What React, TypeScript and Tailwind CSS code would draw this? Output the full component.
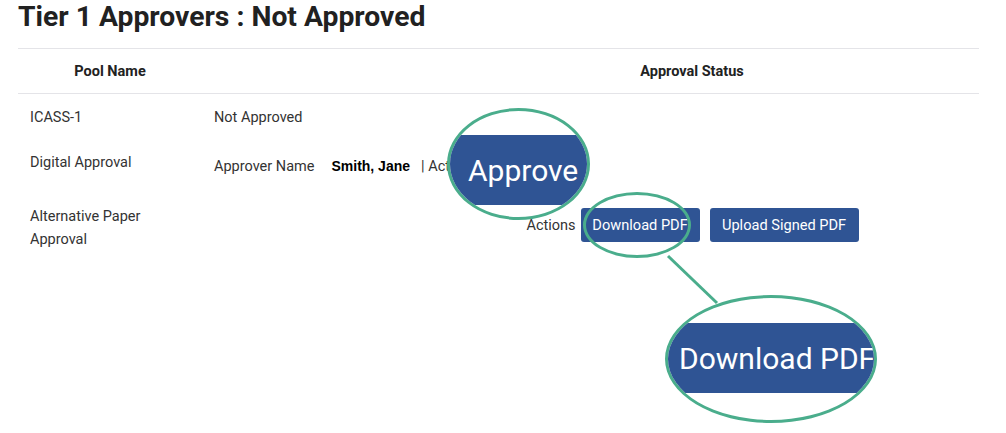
import React from "react";

const GREEN = "#4aad8c";

const Magnifier = ({
    className,
    bandTop,
    textLeft,
    label,
}: {
    className: string;
    bandTop: string;
    textLeft: string;
    label: string;
}) => (
    <div className={`absolute rounded-[50%] overflow-hidden border-[3px] border-[#4aad8c] bg-white ${className}`}>
        <div className={`absolute left-0 right-0 h-[70px] bg-[#2f5494] flex items-center ${bandTop}`}>
            <span className={`absolute ${textLeft} text-[30px] whitespace-nowrap text-white font-[Roboto,sans-serif]`}>
                {label}
            </span>
        </div>
    </div>
);

const ActionButton = ({children, className = ""}: {children: React.ReactNode; className?: string}) => (
    <button className={`h-[34px] rounded-[3px] bg-[#2f5494] text-[14.6px] text-white whitespace-nowrap ${className}`}>
        {children}
    </button>
);

export default function App() {
    return (
        <div className="relative w-[1006px] h-[433px] bg-white overflow-hidden font-[Roboto,sans-serif] text-[#333]">
            <div className="pl-[18px] pr-[27px]">
                <h1 className="h-[34px] leading-[34px] text-[28.3px] font-bold text-[#212121]">
                    Tier 1 Approvers : Not Approved
                </h1>

                <div className="mt-[14px] border-t border-[#e4e4e8]">
                    {/* header */}
                    <div className="grid grid-cols-[184px_203px_1fr] h-[45px] pt-[2px] items-center border-b border-[#e4e4e8] text-[14.5px] font-bold text-[#222]">
                        <div className="text-center">Pool Name</div>
                        <div/>
                        <div className="text-center">Approval Status</div>
                    </div>

                    {/* rows */}
                    <div className="grid grid-cols-[184px_1fr] h-[45px] text-[14.5px] leading-[23px]">
                        <div className="pl-3 pt-[12px]">ICASS-1</div>
                        <div className="pl-3 pt-[12px]">Not Approved</div>
                    </div>

                    <div className="grid grid-cols-[184px_1fr] h-[55px] text-[14.5px] leading-[23px]">
                        <div className="pl-3 pt-[12px]">Digital Approval</div>
                        <div className="pl-3 pt-[10px]">
                            <div className="flex h-[34px] items-center">
                                <span>Approver Name</span>
                                <span className="ml-[17px] text-[14px] font-bold text-black font-['Liberation_Sans',sans-serif]">
                                    Smith, Jane
                                </span>
                                <span className="ml-[11px]">| Actions</span>
                                <button className="ml-[5px] h-[34px] rounded-[3px] bg-[#2f5494] px-3 text-[14.6px] text-white">
                                    Approve
                                </button>
                            </div>
                        </div>
                    </div>

                    <div className="grid grid-cols-[184px_203px_1fr] text-[14.5px] leading-[23px]">
                        <div className="pl-3 pt-[11px] pr-8">Alternative Paper Approval</div>
                        <div/>
                        <div className="pt-[14px] flex justify-center">
                            <div className="flex h-[34px] items-center pl-[1px]">
                                <span className="mr-[5px]">Actions</span>
                                <ActionButton className="w-[119px]">Download PDF</ActionButton>
                                <ActionButton className="ml-[10px] w-[149px]">Upload Signed PDF</ActionButton>
                            </div>
                        </div>
                    </div>
                </div>
            </div>

            {/* callouts */}
            <svg className="absolute inset-0 pointer-events-none" width="1006" height="433">
                <line x1="668" y1="256" x2="717" y2="303" stroke={GREEN} strokeWidth="3"/>
            </svg>
            <div className="absolute left-[583px] top-[192px] w-[108px] h-[66px] rounded-[50%] border-[3px] border-[#4aad8c]"/>
            <Magnifier
                className="left-[447px] top-[108px] w-[143px] h-[112px]"
                bandTop="top-[24px]"
                textLeft="left-[18px]"
                label="Approve"
            />
            <Magnifier
                className="left-[665px] top-[295px] w-[212px] h-[128px]"
                bandTop="top-[25px]"
                textLeft="left-[11px]"
                label="Download PDF"
            />
        </div>
    );
}
